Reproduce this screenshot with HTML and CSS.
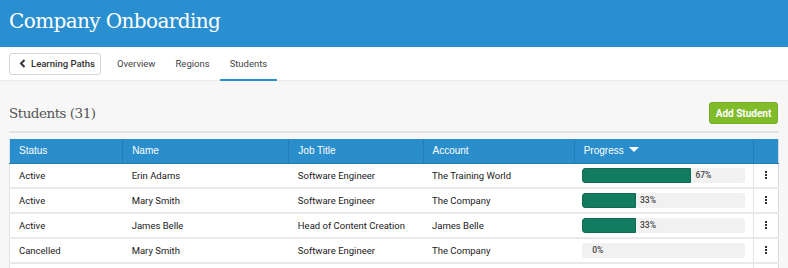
FILE: index.html
```html
<!DOCTYPE html>
<html lang="en">
<head>
    <meta charset="UTF-8">
    <title>Company Onboarding</title>
    <link rel="stylesheet" href="styles.css">
</head>
<body>
    <header class="topbar">
        <h1>Company Onboarding</h1>
    </header>

    <nav class="subnav">
        <button class="back-btn">
            <svg width="7" height="9" viewBox="0 0 7 9"><path d="M5.5 1 L2 4.5 L5.5 8" fill="none" stroke="#333" stroke-width="2"/></svg>
            Learning Paths
        </button>
        <a class="tab">Overview</a>
        <a class="tab">Regions</a>
        <a class="tab active">Students</a>
    </nav>

    <main class="content">
        <div class="section-head">
            <h2>Students (31)</h2>
            <button class="add-btn">Add Student</button>
        </div>

        <table class="students">
            <thead>
                <tr>
                    <th class="col-status">Status</th>
                    <th class="col-name">Name</th>
                    <th class="col-job">Job Title</th>
                    <th class="col-account">Account</th>
                    <th class="col-progress">Progress <span class="caret"></span></th>
                    <th class="col-actions"></th>
                </tr>
            </thead>
            <tbody>
                <tr>
                    <td>Active</td>
                    <td>Erin Adams</td>
                    <td>Software Engineer</td>
                    <td>The Training World</td>
                    <td><div class="bar"><div class="fill" style="width: 67%"></div><span>67%</span></div></td>
                    <td class="kebab"><i></i><i></i><i></i></td>
                </tr>
                <tr>
                    <td>Active</td>
                    <td>Mary Smith</td>
                    <td>Software Engineer</td>
                    <td>The Company</td>
                    <td><div class="bar"><div class="fill" style="width: 33%"></div><span>33%</span></div></td>
                    <td class="kebab"><i></i><i></i><i></i></td>
                </tr>
                <tr>
                    <td>Active</td>
                    <td>James Belle</td>
                    <td>Head of Content Creation</td>
                    <td>James Belle</td>
                    <td><div class="bar"><div class="fill" style="width: 33%"></div><span>33%</span></div></td>
                    <td class="kebab"><i></i><i></i><i></i></td>
                </tr>
                <tr>
                    <td>Cancelled</td>
                    <td>Mary Smith</td>
                    <td>Software Engineer</td>
                    <td>The Company</td>
                    <td><div class="bar empty"><span>0%</span></div></td>
                    <td class="kebab"><i></i><i></i><i></i></td>
                </tr>
                <tr class="spacer">
                    <td></td>
                    <td></td>
                    <td></td>
                    <td></td>
                    <td></td>
                    <td class="kebab"></td>
                </tr>
            </tbody>
        </table>
    </main>
</body>
</html>
```

FILE: styles.css
```css
html, body {
    margin: 0;
    padding: 0;
    height: 268px;
    overflow: hidden;
}
body {
    font-family: Roboto, "Liberation Sans", sans-serif;
    font-size: 9.5px;
    color: #222;
    background-color: #f7f7f7;
}
.topbar {
    background-color: #2a8fd0;
    height: 47px;
    padding: 0 9px;
    box-sizing: border-box;
}
.topbar h1 {
    margin: 0;
    padding-top: 8px;
    font-family: "DejaVu Serif", serif;
    font-weight: normal;
    font-size: 20px;
    line-height: 26px;
    letter-spacing: -0.6px;
    color: white;
}
.subnav {
    display: flex;
    align-items: stretch;
    height: 34px;
    padding: 0 9px;
    background: white;
    border-bottom: 1px solid #ececec;
    box-sizing: border-box;
}
.back-btn {
    align-self: center;
    display: flex;
    align-items: center;
    gap: 5px;
    width: 92px;
    height: 22px;
    margin-right: 6px;
    padding: 0 0 0 9px;
    border: 1px solid #d4d4d4;
    border-radius: 3px;
    background: white;
    font-family: Roboto, sans-serif;
    font-weight: 500;
    font-size: 9.5px;
    color: #333;
    white-space: nowrap;
    box-sizing: border-box;
}
.tab {
    display: flex;
    align-items: center;
    padding: 0 10px;
    border-bottom: 2px solid transparent;
    margin-bottom: -1px;
    color: #444;
    font-size: 9.5px;
}
.tab.active {
    border-bottom-color: #2a8fd0;
}
.content {
    padding: 0 9px;
}
.section-head {
    display: flex;
    justify-content: space-between;
    align-items: center;
    padding: 21px 1px 7px 0;
    border-bottom: 2px solid #e3e3e3;
}
.section-head h2 {
    margin: 0;
    font-family: "DejaVu Serif", serif;
    font-weight: normal;
    font-size: 13.5px;
    letter-spacing: -0.5px;
    color: #555;
}
.add-btn {
    height: 22px;
    width: 69px;
    padding: 0;
    border: 1px solid #76ad24;
    border-radius: 3px;
    background-color: #80bc2a;
    color: white;
    font-family: Roboto, sans-serif;
    font-weight: 700;
    font-size: 10px;
}
.students {
    width: 770px;
    margin-top: 6px;
    border-collapse: collapse;
    background: white;
    border-left: 1px solid #e0e0e0;
    border-right: 1px solid #d8d8d8;
    table-layout: fixed;
}
.students th {
    height: 24px;
    padding: 0 0 0 9px;
    background-color: #2a8dcc;
    border-left: 1px solid #227cb6;
    border-bottom: 1px solid #227cb6;
    color: white;
    font-family: "Liberation Sans", Arial, sans-serif;
    font-weight: normal;
    font-size: 10px;
    text-align: left;
    box-sizing: border-box;
}
.students th:first-child {
    border-left: none;
}
.col-status { width: 113px; }
.col-name { width: 166px; }
.col-job { width: 134px; }
.col-account { width: 151px; }
.col-progress { width: 179px; }
.col-actions { width: 25px; }
.caret {
    display: inline-block;
    width: 0;
    height: 0;
    margin-left: 2px;
    vertical-align: 2px;
    border-left: 5px solid transparent;
    border-right: 5px solid transparent;
    border-top: 5px solid white;
}
.students td {
    height: 23px;
    padding: 0 0 0 9px;
    border-bottom: 2px solid #e9e9e9;
    color: #1a1a1a;
    white-space: nowrap;
    overflow: hidden;
}
.students td:nth-child(5) {
    padding-left: 8px;
}
.students td.kebab {
    border-left: 1px solid #e3e3e3;
    padding: 0;
    text-align: center;
}
.kebab i {
    display: block;
    width: 2px;
    height: 2px;
    margin: 1px auto;
    background: #333;
}
.bar {
    display: flex;
    align-items: center;
    width: 163px;
    height: 15px;
    background: #f1f1f1;
    border-radius: 3px;
    overflow: hidden;
}
.fill {
    height: 100%;
    background-color: #137c60;
    border: 1px solid #0f6a51;
    border-radius: 3px 0 0 3px;
    box-sizing: border-box;
}
.bar span {
    margin-left: 4px;
    font-size: 8.5px;
    font-weight: 500;
    color: #444;
}
.bar.empty span {
    margin-left: 10px;
}
```
